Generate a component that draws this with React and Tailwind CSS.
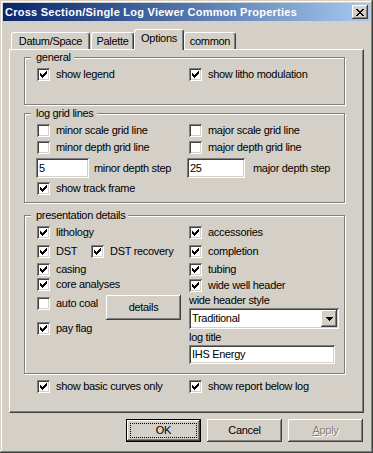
import React from 'react';

const sunken = 'shadow-[inset_1px_1px_#808080,inset_-1px_-1px_#ffffff,inset_2px_2px_#404040,inset_-2px_-2px_#d4d0c8]';
const raised = 'shadow-[inset_-1px_-1px_#404040,inset_1px_1px_#ffffff,inset_-2px_-2px_#808080,inset_2px_2px_#d4d0c8]';

function Check({ label, checked = true, className = '' }) {
  return (
    <div className={`flex items-center h-[13px] gap-[6px] ${className}`}>
      <span className={`flex items-start p-[3px] w-[13px] h-[13px] shrink-0 bg-white ${sunken}`}>
        {checked && (
          <svg width="7" height="7" viewBox="0 0 7 7" shapeRendering="crispEdges" className="block">
            <path
              d="M0 2h1v3H0z M1 3h1v3H1z M2 4h1v3H2z M3 3h1v3H3z M4 2h1v3H4z M5 1h1v3H5z M6 0h1v3H6z"
              fill="#000"
            />
          </svg>
        )}
      </span>
      <span className="whitespace-nowrap leading-[13px]">{label}</span>
    </div>
  );
}

function Group({ title, className = '', children }) {
  return (
    <div className={`relative border border-[#808080] shadow-[1px_1px_0_#ffffff,inset_1px_1px_0_#ffffff] pt-[10px] pl-[12px] ${className}`}>
      <span className="absolute left-[6px] -top-[7px] bg-[#d4d0c8] pl-[5px] pr-[3px] leading-[13px] whitespace-nowrap">
        {title}
      </span>
      {children}
    </div>
  );
}

function Field({ value, className = '' }) {
  return (
    <div className={`flex items-center bg-white pl-[3px] ${sunken} ${className}`}>
      <span className="leading-[13px]">{value}</span>
    </div>
  );
}

function Tab({ label, selected, className = '' }) {
  return (
    <div
      className={`flex justify-center rounded-t-[3px] border-l border-t border-white border-r border-r-[#404040] shadow-[inset_-1px_0_#808080] bg-[#d4d0c8] ${
        selected ? 'relative z-10 h-[21px] -mb-[1px] pt-[2px]' : 'h-[17px] pt-[2px]'
      } ${className}`}
    >
      <span className="leading-[13px]">{label}</span>
    </div>
  );
}

function Button({ children, className = '' }) {
  return (
    <div className={`w-[75px] h-[23px] flex items-center justify-center bg-[#d4d0c8] ${raised} ${className}`}>
      {children}
    </div>
  );
}

export default function App() {
  return (
    <div className="w-[373px] h-[453px] bg-[#d4d0c8] p-[3px] text-[11px] tracking-[-0.3px] text-black font-['Liberation_Sans',Arial,sans-serif] shadow-[inset_-1px_-1px_#404040,inset_1px_1px_#d4d0c8,inset_-2px_-2px_#808080,inset_2px_2px_#ffffff]">
      {/* title bar */}
      <div className="h-[18px] flex items-center justify-between pl-[2px] pr-[2px] bg-linear-to-r from-[#0a246a] to-[#a6caf0]">
        <span className="text-white font-bold text-[11px] tracking-[0.25px] leading-[13px] whitespace-nowrap">
          Cross Section/Single Log Viewer Common Properties
        </span>
        <div className={`w-[16px] h-[14px] flex items-center justify-center bg-[#d4d0c8] ${raised}`}>
          <svg width="8" height="7" viewBox="0 0 8 7" shapeRendering="crispEdges" className="block">
            <path
              d="M0 0h2v1H0z M6 0h2v1H6z M1 1h2v1H1z M5 1h2v1H5z M2 2h4v1H2z M3 3h2v1H3z M2 4h4v1H2z M1 5h2v1H1z M5 5h2v1H5z M0 6h2v1H0z M6 6h2v1H6z"
              fill="#000"
            />
          </svg>
        </div>
      </div>

      {/* tabs */}
      <div className="mt-[8px] ml-[8px] h-[20px] flex items-end">
        <Tab label="Datum/Space" className="w-[79px] mr-[1px]" />
        <Tab label="Palette" className="w-[43px]" />
        <Tab label="Options" selected className="w-[50px]" />
        <Tab label="common" className="w-[52px]" />
      </div>

      {/* tab panel */}
      <div className="w-[355px] h-[364px] ml-[6px] border border-t-white border-l-white border-r-[#404040] border-b-[#404040] shadow-[inset_-1px_-1px_#808080] pt-[7px] pl-[14px]">
        <Group title="general" className="w-[321px] h-[48px]">
          <div className="flex">
            <Check label="show legend" className="w-[152px]" />
            <Check label="show litho modulation" />
          </div>
        </Group>

        <Group title="log grid lines" className="w-[321px] h-[90px] mt-[8px]">
          <div className="flex">
            <Check label="minor scale grid line" checked={false} className="w-[152px]" />
            <Check label="major scale grid line" checked={false} />
          </div>
          <div className="flex mt-[4px]">
            <Check label="minor depth grid line" checked={false} className="w-[152px]" />
            <Check label="major depth grid line" checked={false} />
          </div>
          <div className="flex mt-[4px] h-[20px] items-center">
            <div className="w-[152px] flex items-center -ml-[1px]">
              <Field value="5" className="w-[53px] h-[20px]" />
              <span className="ml-[5px] leading-[13px]">minor depth step</span>
            </div>
            <div className="flex items-center -ml-[1px]">
              <Field value="25" className="w-[58px] h-[20px]" />
              <span className="ml-[8px] leading-[13px]">major depth step</span>
            </div>
          </div>
          <Check label="show track frame" className="mt-[4px]" />
        </Group>

        <Group title="presentation details" className="w-[321px] h-[159px] mt-[12px]">
          <div className="flex">
            <div className="w-[152px] flex flex-col">
              <Check label="lithology" />
              <div className="flex mt-[6px]">
                <Check label="DST" className="w-[54px]" />
                <Check label="DST recovery" />
              </div>
              <Check label="casing" className="mt-[5px]" />
              <Check label="core analyses" className="mt-[2px]" />
              <div className="flex mt-[4px]">
                <Check label="auto coal" checked={false} className="w-[69px] mt-[2px]" />
                <Button className="h-[25px] w-[75px]">details</Button>
              </div>
              <Check label="pay flag" className="mt-[2px]" />
            </div>
            <div className="flex flex-col">
              <Check label="accessories" />
              <Check label="completion" className="mt-[6px]" />
              <Check label="tubing" className="mt-[5px]" />
              <Check label="wide well header" className="mt-[3px]" />
              <span className="mt-[2px] leading-[13px]">wide header style</span>
              <div className={`mt-[1px] w-[150px] h-[21px] flex items-center justify-between bg-white pl-[3px] pr-[2px] ${sunken}`}>
                <span className="leading-[13px]">Traditional</span>
                <div className={`w-[16px] h-[17px] flex items-center justify-center bg-[#d4d0c8] ${raised}`}>
                  <svg width="7" height="4" viewBox="0 0 7 4" shapeRendering="crispEdges" className="block">
                    <path d="M0 0h7v1H0z M1 1h5v1H1z M2 2h3v1H2z M3 3h1v1H3z" fill="#000" />
                  </svg>
                </div>
              </div>
              <span className="mt-[2px] leading-[13px]">log title</span>
              <Field value="IHS Energy" className="mt-[1px] w-[146px] h-[19px]" />
            </div>
          </div>
        </Group>

        <div className="flex mt-[6px] pl-[13px]">
          <Check label="show basic curves only" className="w-[152px]" />
          <Check label="show report below log" />
        </div>
      </div>

      {/* dialog buttons */}
      <div className="flex justify-end gap-[6px] mt-[6px] pr-[7px]">
        <div className="w-[75px] h-[23px] border border-black">
          <div className={`h-full p-[3px] bg-[#d4d0c8] ${raised}`}>
            <div className="h-full border border-dotted border-black flex items-center justify-center">OK</div>
          </div>
        </div>
        <Button>Cancel</Button>
        <Button>
          <span className="text-[#808080] [text-shadow:1px_1px_0_#ffffff]">
            <span className="underline">A</span>pply
          </span>
        </Button>
      </div>
    </div>
  );
}
